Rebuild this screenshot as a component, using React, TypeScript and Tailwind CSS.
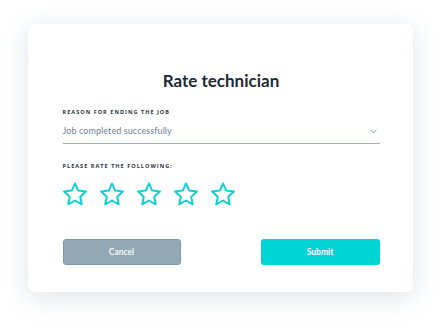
import { ChevronDown } from "lucide-react";

function StarIcon() {
  return (
    <svg width="26" height="26" viewBox="0 0 26 26" fill="none">
      <polygon
        points="13,2.5 16.23,9.55 23.94,10.45 18.23,15.7 19.76,23.3 13,19.5 6.24,23.3 7.77,15.7 2.06,10.45 9.77,9.55"
        stroke="#12d0d2"
        strokeWidth="2"
        strokeLinejoin="round"
      />
    </svg>
  );
}

function App() {
  return (
    <div className="w-[440px] h-[322px] bg-white pt-[24px] flex justify-center font-['Lato',sans-serif]">
      <div className="w-[385px] h-[268px] bg-white rounded-[6px] shadow-[0_5px_26px_rgba(120,140,165,0.24)] pl-[35px] pr-[33px] pt-[47px] flex flex-col">
        <h1 className="text-center text-[17px] leading-[20px] font-bold text-[#1d2a38]">
          Rate technician
        </h1>

        <p className="mt-[17px] text-[5.5px] leading-[8px] font-bold tracking-[0.19em] text-[#2a3440] uppercase font-['Open_Sans',sans-serif]">
          Reason for ending the job
        </p>
        <div className="mt-[8px] pb-[5px] border-b border-[#a3b2c1] flex items-center justify-between">
          <span className="text-[9px] leading-[14px] text-[#6f8398] tracking-[0.01em]">
            Job completed successfully
          </span>
          <ChevronDown size={11} strokeWidth={1.6} className="text-[#5f7285] mr-[1px]" />
        </div>

        <p className="mt-[18px] text-[5.5px] leading-[8px] font-bold tracking-[0.19em] text-[#2a3440] uppercase font-['Open_Sans',sans-serif]">
          Please rate the following:
        </p>
        <div className="mt-[11px] flex gap-[11px] -ml-[1px]">
          <StarIcon />
          <StarIcon />
          <StarIcon />
          <StarIcon />
          <StarIcon />
        </div>

        <div className="mt-[32px] flex justify-between">
          <button className="w-[118px] h-[26px] rounded-[3px] bg-[#94a7b4] border border-[#8196a5] text-[#f4f7f9] text-[8.5px] font-bold">
            Cancel
          </button>
          <button className="w-[119px] h-[26px] rounded-[3px] bg-[#00d3d4] text-white text-[8.5px] font-bold">
            Submit
          </button>
        </div>
      </div>
    </div>
  );
}

export default App;
